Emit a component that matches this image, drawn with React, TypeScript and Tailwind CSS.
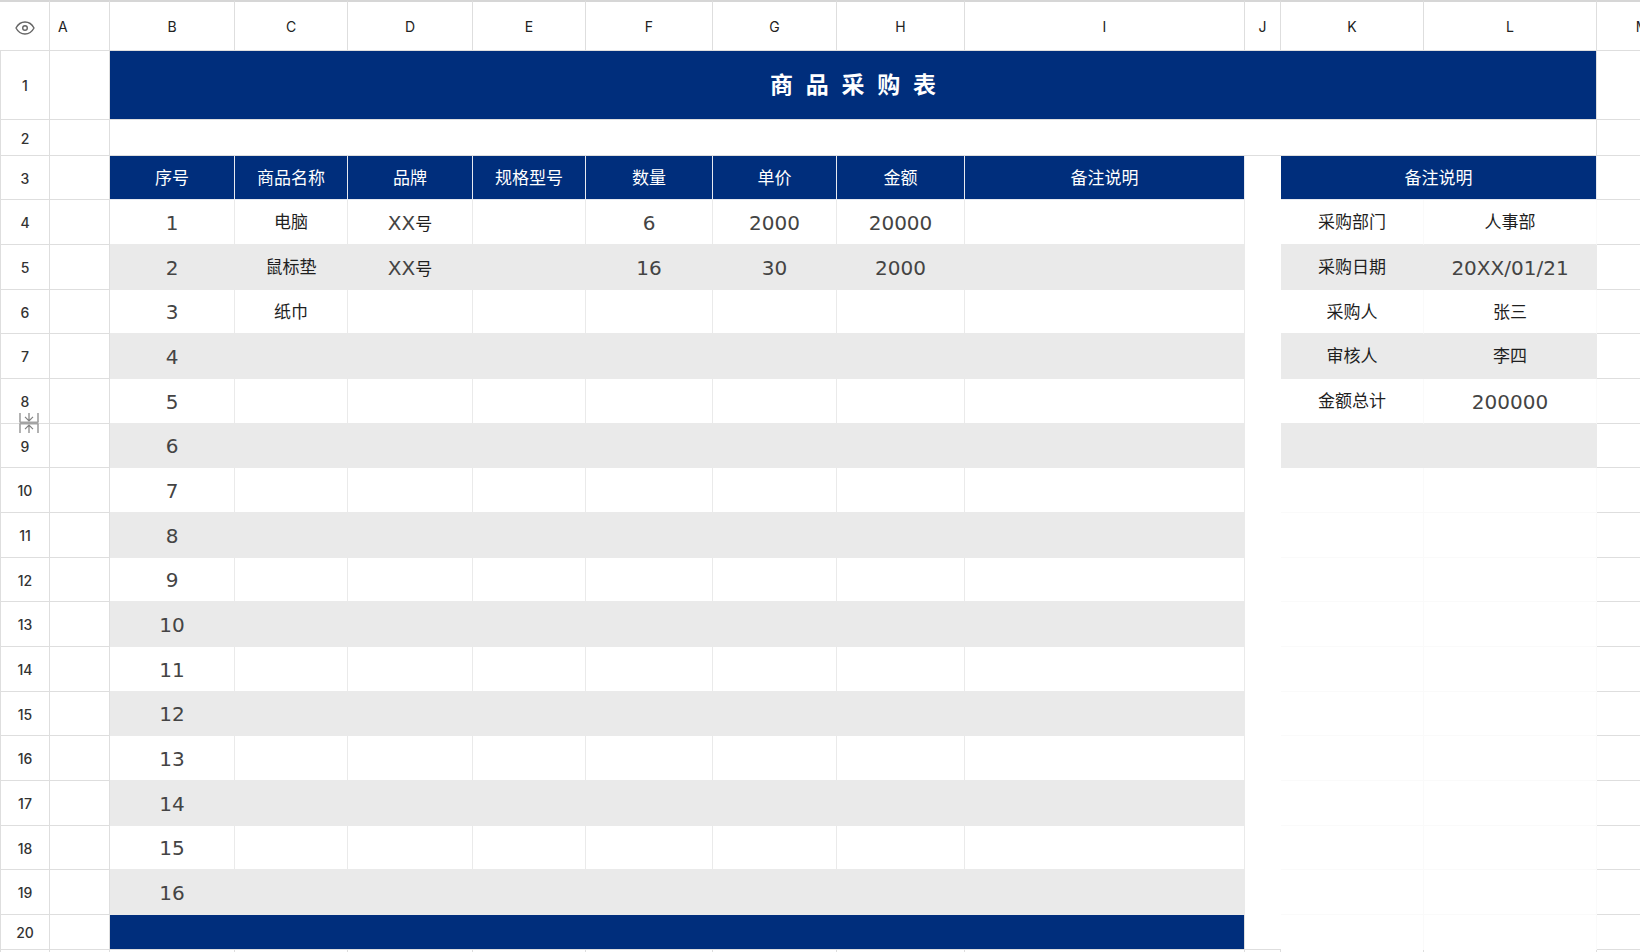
import React from "react";
import clsx from "clsx";

const cjk = "font-['DejaVu_Sans','Noto_Sans_CJK_SC',sans-serif]";
const line = "border-[#dedede]";

type Item = { name?: string; brand?: string; model?: string; qty?: string; price?: string; amount?: string; note?: string };
type Summary = { label: string; value: string };

const items: Item[] = [
  { name: "电脑", brand: "XX号", qty: "6", price: "2000", amount: "20000" },
  { name: "鼠标垫", brand: "XX号", qty: "16", price: "30", amount: "2000" },
  { name: "纸巾" },
  ...Array.from({ length: 13 }, () => ({})),
];

const summary: Summary[] = [
  { label: "采购部门", value: "人事部" },
  { label: "采购日期", value: "20XX/01/21" },
  { label: "采购人", value: "张三" },
  { label: "审核人", value: "李四" },
  { label: "金额总计", value: "200000" },
  { label: "", value: "" },
];

const rowHeights = ["h-[45px]", "h-[45px]", "h-[44px]"];
const letters = ["B", "C", "D", "E", "F", "G", "H", "I", "J", "K", "L", "M"];
const headings = ["序号", "商品名称", "品牌", "规格型号", "数量", "单价", "金额", "备注说明"];

/** Latin letters and digits are set larger and lighter than the Chinese characters beside them. */
function Value({ text = "" }: { text?: string }) {
  const parts = text.match(/[\x20-\x7e]+|[^\x20-\x7e]+/g) ?? [];
  return (
    <>
      {parts.map((part, i) => (
        <span key={i} className={/^[\x20-\x7e]/.test(part) ? "text-[20px] text-[#444]" : "text-[17px] text-[#1f1f1f]"}>
          {part}
        </span>
      ))}
    </>
  );
}

function EyeIcon() {
  return (
    <svg width="20" height="14" viewBox="0 0 20 14" fill="none" stroke="#666" strokeWidth="1.4" aria-hidden="true">
      <path d="M1 7C3 3.200 6.200 1 10 1s7 2.200 9 6c-2 3.800-5.200 6-9 6S3 10.800 1 7Z" strokeLinejoin="round" />
      <circle cx="10" cy="7" r="2.300" />
    </svg>
  );
}

function RowResizeIcon() {
  return (
    <svg width="20" height="20" viewBox="0 0 20 20" fill="none" stroke="#808080" strokeWidth="1.200" aria-hidden="true">
      <path d="M1 0v9M19 0v9M1 20v-9M19 20v-9" />
      <path d="M0.500 10h19" stroke="#a3a3a3" strokeWidth="3" />
      <path d="M10 0v8M6 3.800 10 7.800l4-4M10 20v-8M6 16.200l4-4 4 4" />
    </svg>
  );
}

function RowHead({ n, children }: { n: number; children?: React.ReactNode }) {
  return (
    <>
      <th scope="row" className={clsx("relative border-b border-r border-l text-[14px] font-medium text-[#333]", line)}>
        {n}
        {children}
      </th>
      <td className={clsx("border-b border-r", line)} />
    </>
  );
}

const EndCell = () => <td className={clsx("border-b", line)} />;

export default function App() {
  return (
    <main className="h-screen overflow-hidden bg-white font-['Inter',sans-serif] leading-none text-[#2b2b2b]">
      <table className="w-full min-w-[1688px] table-fixed border-separate border-spacing-0 text-center [&_td]:p-0 [&_td]:pt-px [&_th]:p-0 [&_th]:pt-0.5">
        <colgroup>
          <col className="w-[50px]" />
          <col className="w-[60px]" />
          <col className="w-[125px]" />
          <col className="w-[113px]" />
          <col className="w-[125px]" />
          <col className="w-[113px]" />
          <col className="w-[127px]" />
          <col className="w-[124px]" />
          <col className="w-[128px]" />
          <col />
          <col className="w-[36px]" />
          <col className="w-[143px]" />
          <col className="w-[173px]" />
          <col className="w-[91px]" />
        </colgroup>
        <thead>
          <tr className="h-[51px] text-[14px] text-[#222]">
            <th className={clsx("border-t-2 border-r border-b border-t-[#d6d6d6]", line)}>
              <button type="button" aria-label="显示" className="inline-flex align-middle">
                <EyeIcon />
              </button>
            </th>
            <th scope="col" className={clsx("border-t-2 border-r border-b border-t-[#d6d6d6] text-left font-normal", line)}>
              <span className="pl-2">A</span>
            </th>
            {letters.map((l) => (
              <th key={l} scope="col" className={clsx("border-t-2 border-r border-b border-t-[#d6d6d6] font-normal", line)}>
                {l}
              </th>
            ))}
          </tr>
        </thead>
        <tbody>
          <tr className="h-[69px]">
            <RowHead n={1} />
            <td colSpan={11} className={clsx("border-b border-r bg-[#002e7c]", line)}>
              <h1 className="whitespace-pre font-['Liberation_Sans','Noto_Sans_CJK_SC',sans-serif] text-[23px] font-bold text-white">
                商  品  采  购  表
              </h1>
            </td>
            <EndCell />
          </tr>
          <tr className="h-[36px]">
            <RowHead n={2} />
            <td colSpan={11} className={clsx("border-b border-r", line)} />
            <EndCell />
          </tr>
          <tr className={clsx("h-[44px] text-[17px] text-white", cjk)}>
            <th scope="row" className={clsx("border-b border-r border-l font-['Inter',sans-serif] text-[14px] font-medium text-[#333]", line)}>
              3
            </th>
            <td className={clsx("border-b border-r", line)} />
            {headings.map((h) => (
              <th key={h} scope="col" className="border-r border-b border-[#e6e9f0] bg-[#002e7c] font-normal">
                {h}
              </th>
            ))}
            <td />
            <th colSpan={2} scope="colgroup" className="border-r border-b border-[#e6e9f0] bg-[#002e7c] font-normal">
              备注说明
            </th>
            <EndCell />
          </tr>
          {items.map((item, i) => {
            const grey = i % 2 === 1;
            const side = summary[i];
            const cell = clsx("border-r border-b border-[#eaeaea]", grey && "bg-[#eaeaea]");
            const sideCell = clsx(
              "border-r border-b",
              side && grey ? "border-[#eaeaea] bg-[#eaeaea]" : side ? "border-r-[#fafafa] border-b-[#eaeaea]" : "border-[#fafafa]",
            );
            return (
              <tr key={i} className={rowHeights[i % 3]}>
                <RowHead n={i + 4}>
                  {i === 4 && (
                    <button type="button" aria-label="调整行高" className="absolute -bottom-[10px] left-[18px] z-10 cursor-row-resize">
                      <RowResizeIcon />
                    </button>
                  )}
                </RowHead>
                {[String(i + 1), item.name, item.brand, item.model, item.qty, item.price, item.amount, item.note].map((v, c) => (
                  <td key={c} className={clsx(cell, cjk)}>
                    <Value text={v} />
                  </td>
                ))}
                <td />
                <td className={clsx(sideCell, cjk)}>
                  <Value text={side?.label} />
                </td>
                <td className={clsx(sideCell, cjk)}>
                  <Value text={side?.value} />
                </td>
                <EndCell />
              </tr>
            );
          })}
          <tr className="h-[35px]">
            <RowHead n={20} />
            <td colSpan={8} className={clsx("border-b border-r bg-[#002e7c]", line)} />
            <td className={clsx("border-b", line)} />
            <td className="border-r border-[#fafafa]" />
            <td className="border-r border-[#fafafa]" />
            <EndCell />
          </tr>
          <tr className="h-[36px]">
            <td className={clsx("border-b border-r border-l", line)} />
            <td className={clsx("border-b border-r", line)} />
            {letters.map((l) => (
              <td key={l} className={clsx("border-b border-r", line)} />
            ))}
          </tr>
        </tbody>
      </table>
    </main>
  );
}
